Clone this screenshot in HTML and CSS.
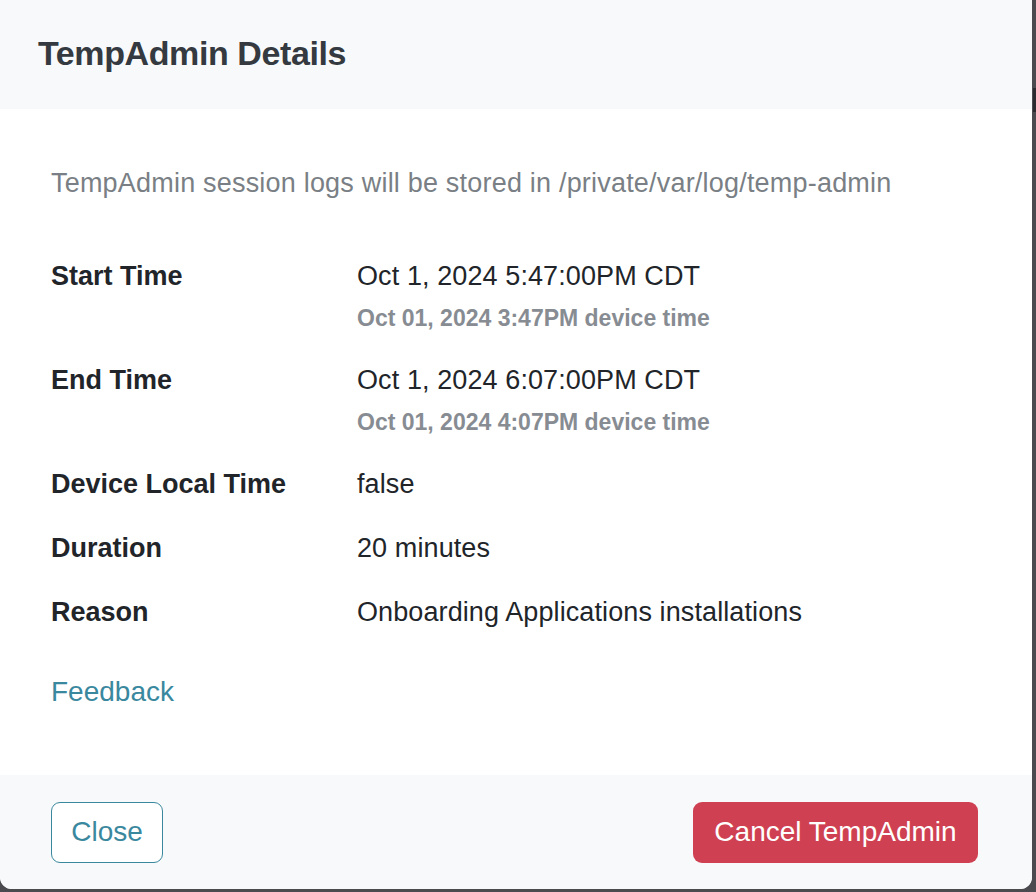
FILE: index.html
```html
<!DOCTYPE html>
<html lang="en">
<head>
<meta charset="utf-8">
<title>TempAdmin Details</title>
<link rel="stylesheet" href="styles.css">
</head>
<body>
<div class="backdrop-thumb"></div>
<div class="modal">
  <header class="modal-header">
    <h2 class="modal-title">TempAdmin Details</h2>
  </header>
  <section class="modal-body">
    <p class="note">TempAdmin session logs will be stored in /private/var/log/temp-admin</p>
    <dl class="details">
      <dt>Start Time</dt>
      <dd>
        <div class="primary">Oct 1, 2024 5:47:00PM CDT</div>
        <div class="secondary">Oct 01, 2024 3:47PM device time</div>
      </dd>
      <dt>End Time</dt>
      <dd>
        <div class="primary">Oct 1, 2024 6:07:00PM CDT</div>
        <div class="secondary">Oct 01, 2024 4:07PM device time</div>
      </dd>
      <dt>Device Local Time</dt>
      <dd><div class="primary">false</div></dd>
      <dt>Duration</dt>
      <dd><div class="primary">20 minutes</div></dd>
      <dt>Reason</dt>
      <dd><div class="primary">Onboarding Applications installations</div></dd>
    </dl>
    <a class="feedback" href="#">Feedback</a>
  </section>
  <footer class="modal-footer">
    <button class="btn btn-outline" type="button">Close</button>
    <button class="btn btn-danger" type="button">Cancel TempAdmin</button>
  </footer>
</div>
</body>
</html>
```

FILE: styles.css
```css
html, body {
  margin: 0;
  padding: 0;
}

body {
  position: relative;
  width: 1036px;
  height: 892px;
  overflow: hidden;
  background: #4a4a4f;
  font-family: "Liberation Sans", Arial, Helvetica, sans-serif;
  color: #212529;
}

/* scrollbar thumb of the page behind the overlay */
.backdrop-thumb {
  position: absolute;
  top: 88px;
  right: 0;
  width: 3px;
  height: 24px;
  background: #2c2c30;
}

.modal {
  width: 1032px;
  height: 889px;
  display: flex;
  flex-direction: column;
  background: #ffffff;
  border-radius: 0 0 12px 12px;
  overflow: hidden;
}

.modal-header {
  height: 109px;
  box-sizing: border-box;
  flex: none;
  display: flex;
  align-items: center;
  padding: 0 38px 4px;
  background: #f8f9fa;
}

.modal-title {
  margin: 0;
  font-size: 34px;
  font-weight: 700;
  color: #343a40;
  line-height: 40px;
  letter-spacing: -0.4px;
}

.modal-body {
  flex: 1;
  padding: 56px 50px 0 51px;
  display: flex;
  flex-direction: column;
  align-items: flex-start;
}

.note {
  margin: 0;
  font-size: 27px;
  line-height: 36px;
  letter-spacing: 0.2px;
  color: #7a7f85;
}

.details {
  margin: 57px 0 0;
  display: grid;
  grid-template-columns: 306px auto;
  row-gap: 28px;
}

.details dt {
  font-size: 27px;
  line-height: 36px;
  font-weight: 700;
  color: #212529;
}

.details dd {
  margin: 0;
}

.primary {
  font-size: 27px;
  line-height: 36px;
  letter-spacing: 0.1px;
  color: #212529;
}

.secondary {
  margin-top: 8px;
  font-size: 23px;
  line-height: 32px;
  font-weight: 700;
  color: #878c93;
}

.feedback {
  margin-top: 44px;
  font-size: 28px;
  line-height: 36px;
  color: #3a889e;
  text-decoration: none;
}

.modal-footer {
  height: 114px;
  flex: none;
  display: flex;
  align-items: center;
  justify-content: space-between;
  padding: 0 54px 0 51px;
  background: #f8f9fa;
}

.btn {
  height: 61px;
  padding: 0;
  font-family: inherit;
  font-size: 28px;
  border-radius: 9px;
  cursor: pointer;
}

.btn-outline {
  width: 112px;
  background: #ffffff;
  color: #3a889e;
  border: 1px solid #3a889e;
}

.btn-danger {
  width: 285px;
  background: #cf4152;
  color: #ffffff;
  border: none;
}
```
